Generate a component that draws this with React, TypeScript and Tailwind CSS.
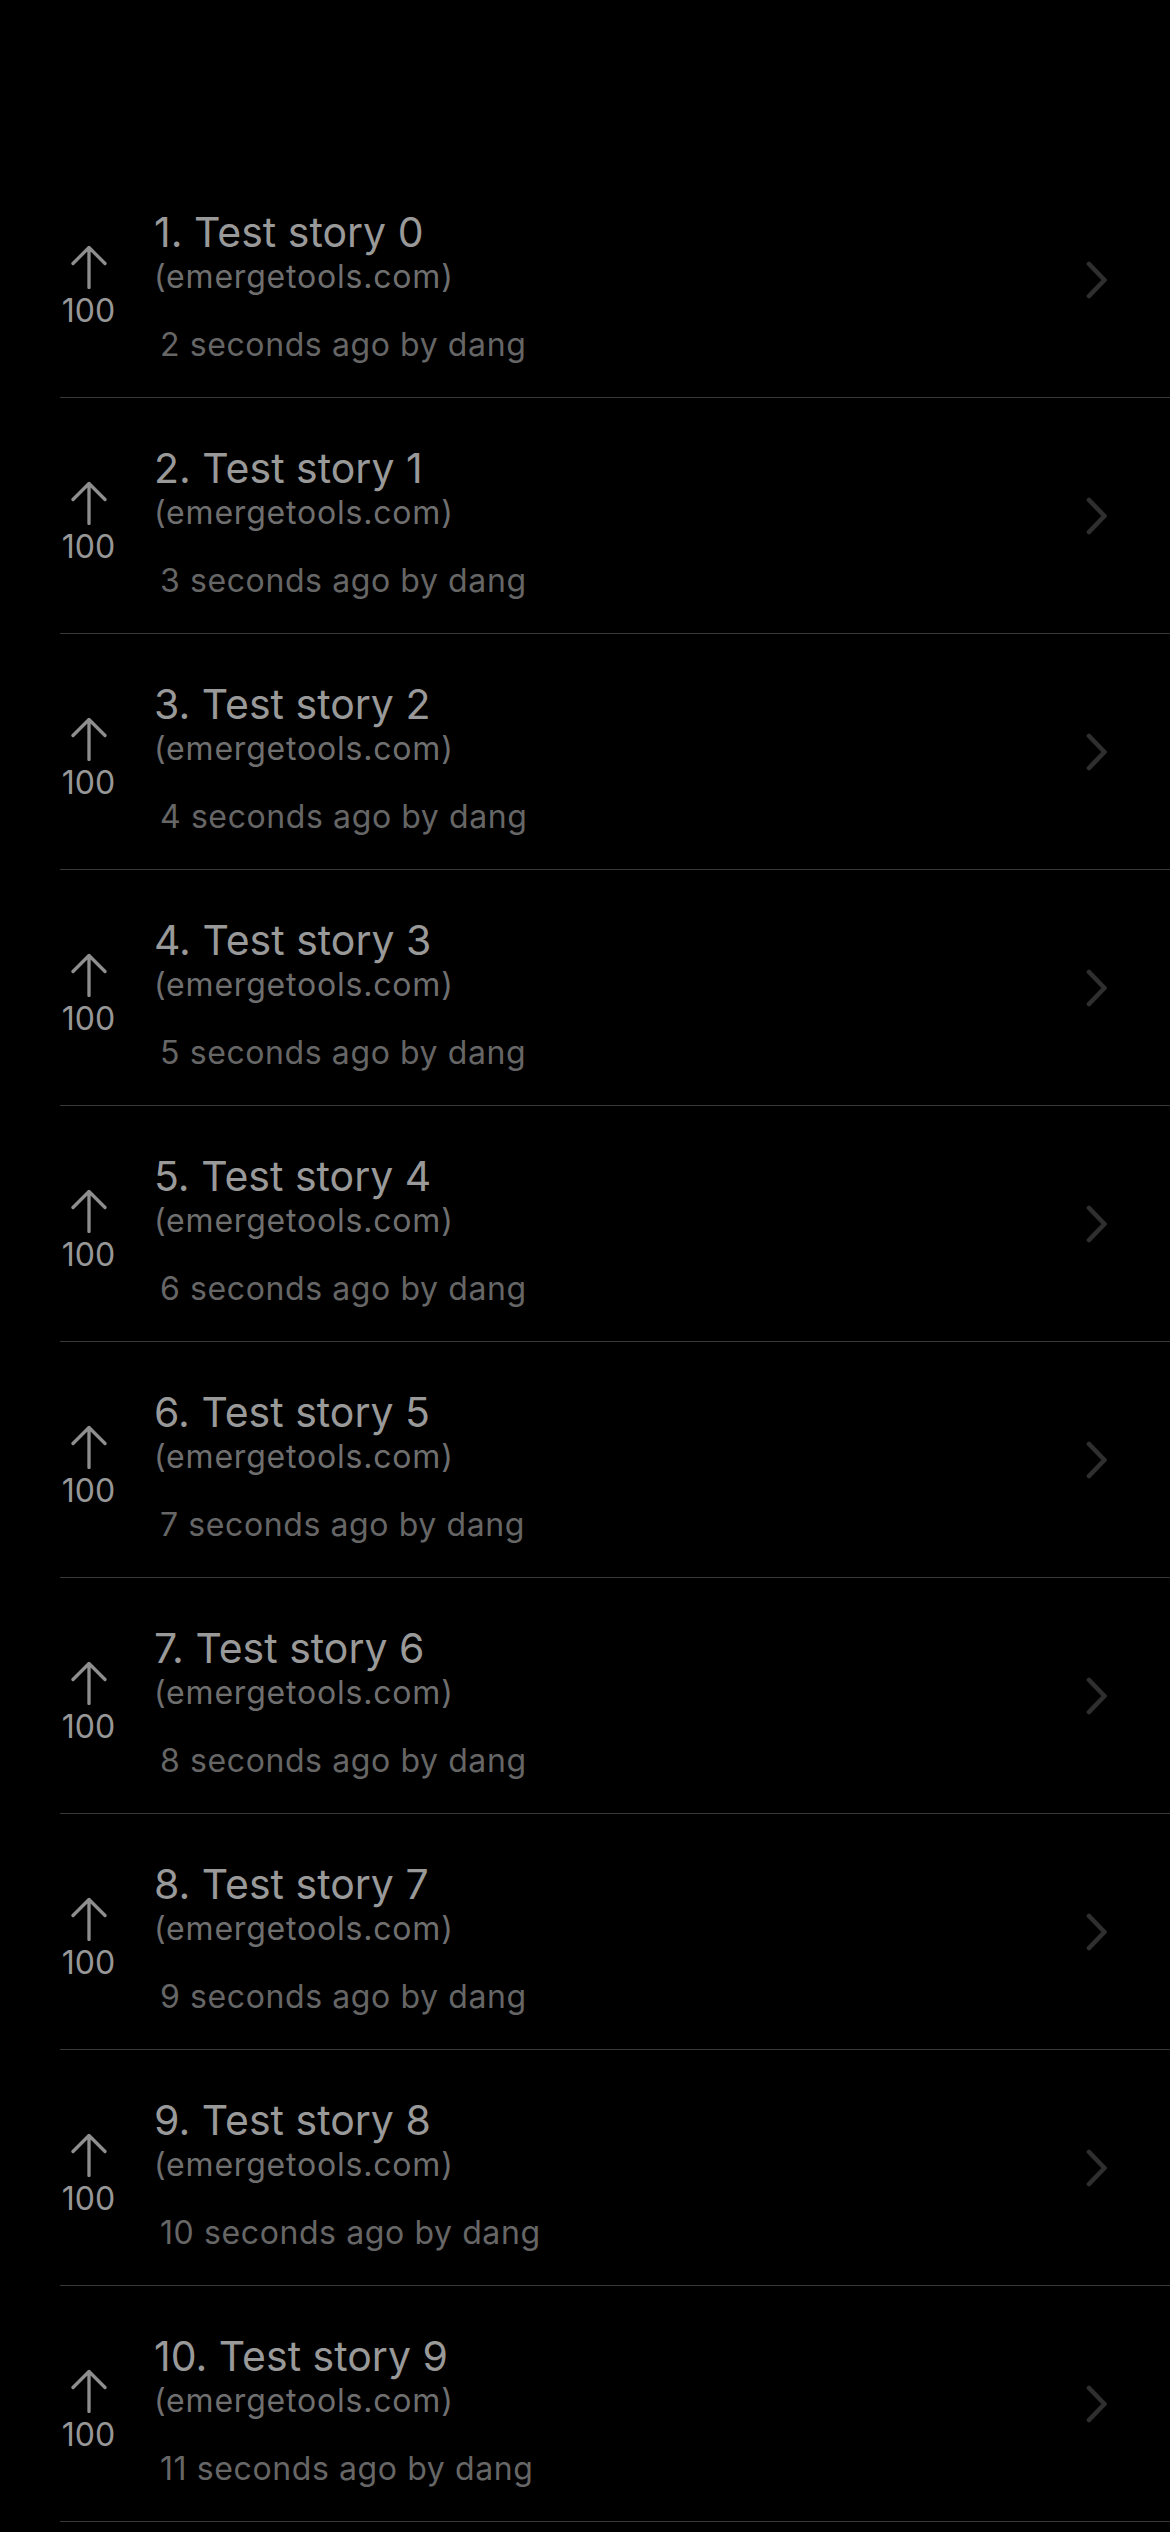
import React from "react";

function ArrowUp() {
  return (
    <svg width="36" height="44" viewBox="0 0 36 44" fill="none" className="block">
      <path d="M18 2.5 V42.5 M2 18.5 L18 2.5 L34 18.5" stroke="#8e8e8e" strokeWidth="3.3" strokeLinecap="round" strokeLinejoin="round" />
    </svg>
  );
}

function Chevron() {
  return (
    <svg width="26" height="38" viewBox="0 0 26 38" fill="none" className="block">
      <path d="M5 3 L20.5 19 L5 35" stroke="#2f2f2f" strokeWidth="4.6" strokeLinecap="round" strokeLinejoin="round" />
    </svg>
  );
}

function Row({ i }: { i: number }) {
  return (
    <div className="ml-[60px] flex h-[236px] border-b border-[#38383a]">
      <div className="flex w-[57px] shrink-0 flex-col items-center pt-[83px]">
        <ArrowUp />
        <div className="mt-[4px] text-[32px] leading-[36px] text-[#979797]">100</div>
      </div>
      <div className="ml-[37px] flex flex-col pt-[44px]">
        <div className="text-[41px] leading-[52px] tracking-[0px] text-[#999999] whitespace-nowrap">
          {i + 1}. Test story {i}
        </div>
        <div className="text-[32px] leading-[38px] tracking-[0.8px] text-[#6f6f6f] whitespace-nowrap">
          (emergetools.com)
        </div>
        <div className="mt-[29px] pl-[6px] text-[32px] leading-[40px] tracking-[0.6px] text-[#666666] whitespace-nowrap">
          {i + 2} seconds ago by dang
        </div>
      </div>
      <div className="ml-auto mr-[60px] flex items-center">
        <Chevron />
      </div>
    </div>
  );
}

export default function App() {
  const rows = Array.from({ length: 10 }, (_, i) => i);
  return (
    <div
      className="h-[2532px] w-[1170px] overflow-hidden bg-black"
      style={{ fontFamily: "Inter, 'Noto Sans', sans-serif" }}
    >
      <div className="h-[162px]" />
      {rows.map((i) => (
        <Row key={i} i={i} />
      ))}
    </div>
  );
}
